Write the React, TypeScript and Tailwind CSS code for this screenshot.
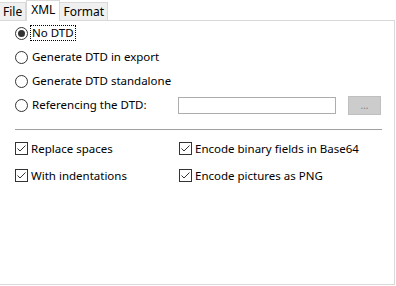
import React from 'react'

function Radio({ checked }: { checked?: boolean }) {
  return (
    <svg width="13" height="13" viewBox="0 0 13 13" className="shrink-0">
      <circle cx="6.5" cy="6.5" r="6" fill="white" stroke="#333" strokeWidth="1" />
      {checked && <circle cx="6.5" cy="6.5" r="3.5" fill="#333" />}
    </svg>
  )
}

function Check() {
  return (
    <svg width="13" height="13" viewBox="0 0 13 13" className="shrink-0">
      <rect x="0.5" y="0.5" width="12" height="12" fill="white" stroke="#333" />
      <path d="M2.5 6.5 L5 9 L10.5 3.5" fill="none" stroke="#333" strokeWidth="1" />
    </svg>
  )
}

function RadioRow({ label, checked, focus }: { label: string; checked?: boolean; focus?: boolean }) {
  return (
    <div className="flex items-center h-[24px] gap-[2px]">
      <Radio checked={checked} />
      <span className={focus ? 'border border-dotted border-black px-px leading-[14px]' : 'px-[2px] leading-[14px]'}>
        {label}
      </span>
    </div>
  )
}

function CheckRow({ label }: { label: string }) {
  return (
    <div className="flex items-center gap-[3px] h-[17px]">
      <Check />
      <span>{label}</span>
    </div>
  )
}

export default function App() {
  return (
    <div className="w-[396px] h-[286px] bg-white text-black text-[11.5px] font-['Segoe_UI','Noto_Sans',sans-serif]">
      <div className="flex items-end h-[20px] text-[12px]">
        <div className="h-[18px] px-[3px] bg-[#f0f0f0] border-r border-t border-[#d9d9d9] leading-[17px]">File</div>
        <div className="h-[21px] px-[4px] bg-white border-x border-t border-[#d9d9d9] -mb-px relative z-10 leading-[18px]">XML</div>
        <div className="h-[18px] px-[3px] bg-[#f0f0f0] border-r border-t border-[#d9d9d9] leading-[17px]">Format</div>
      </div>
      <div className="w-[395px] h-[265px] border border-l-0 border-[#d9d9d9] pl-[15px] pr-[12px]">
        <RadioRow label="No DTD" checked focus />
        <RadioRow label="Generate DTD in export" />
        <RadioRow label="Generate DTD standalone" />
        <div className="flex items-center h-[24px]">
          <div className="flex items-center gap-[2px] w-[163px]">
            <Radio />
            <span className="px-[2px]">Referencing the DTD:</span>
          </div>
          <div className="w-[158px] h-[17px] border border-[#adadad] bg-white" />
          <div className="ml-[12px] w-[33px] h-[19px] bg-[#cccccc] border border-[#bfbfbf] flex items-center justify-center text-[#838383] text-[10px] leading-none">
            ...
          </div>
        </div>
        <div className="mt-[12px] h-px bg-[#a0a0a0] w-[367px]" />
        <div className="grid grid-cols-[164px_1fr] gap-y-[10px] mt-[10px]">
          <CheckRow label="Replace spaces" />
          <CheckRow label="Encode binary fields in Base64" />
          <CheckRow label="With indentations" />
          <CheckRow label="Encode pictures as PNG" />
        </div>
      </div>
    </div>
  )
}
